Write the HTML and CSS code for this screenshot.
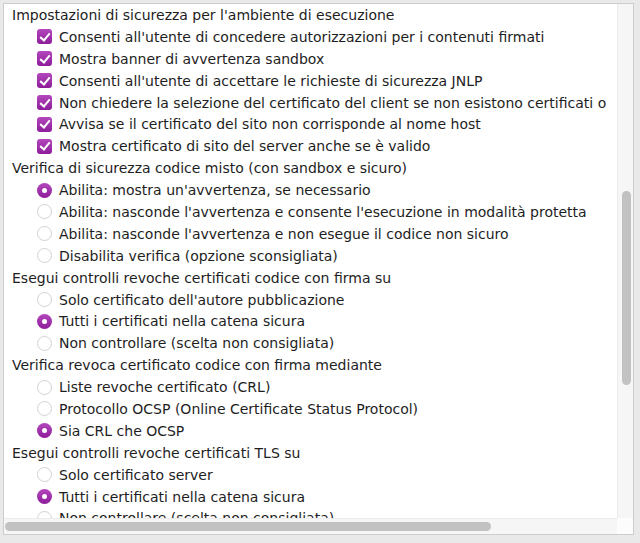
FILE: index.html
```html
<!DOCTYPE html>
<html lang="it">
<head>
    <meta charset="UTF-8">
    <meta name="viewport" content="width=device-width, initial-scale=1.0">
    <title>Impostazioni di sicurezza</title>
    <link rel="stylesheet" href="styles.css">
</head>
<body>
    <div class="pane">
        <div class="viewport">
            <div class="tree">
                <div class="row group">Impostazioni di sicurezza per l'ambiente di esecuzione</div>
                <div class="row item"><span class="check on"></span>Consenti all'utente di concedere autorizzazioni per i contenuti firmati</div>
                <div class="row item"><span class="check on"></span>Mostra banner di avvertenza sandbox</div>
                <div class="row item"><span class="check on"></span>Consenti all'utente di accettare le richieste di sicurezza JNLP</div>
                <div class="row item"><span class="check on"></span>Non chiedere la selezione del certificato del client se non esistono certificati o</div>
                <div class="row item"><span class="check on"></span>Avvisa se il certificato del sito non corrisponde al nome host</div>
                <div class="row item"><span class="check on"></span>Mostra certificato di sito del server anche se è valido</div>

                <div class="row group">Verifica di sicurezza codice misto (con sandbox e sicuro)</div>
                <div class="row item"><span class="radio on"></span>Abilita: mostra un'avvertenza, se necessario</div>
                <div class="row item"><span class="radio"></span>Abilita: nasconde l'avvertenza e consente l'esecuzione in modalità protetta</div>
                <div class="row item"><span class="radio"></span>Abilita: nasconde l'avvertenza e non esegue il codice non sicuro</div>
                <div class="row item"><span class="radio"></span>Disabilita verifica (opzione sconsigliata)</div>

                <div class="row group">Esegui controlli revoche certificati codice con firma su</div>
                <div class="row item"><span class="radio"></span>Solo certificato dell'autore pubblicazione</div>
                <div class="row item"><span class="radio on"></span>Tutti i certificati nella catena sicura</div>
                <div class="row item"><span class="radio"></span>Non controllare (scelta non consigliata)</div>

                <div class="row group">Verifica revoca certificato codice con firma mediante</div>
                <div class="row item"><span class="radio"></span>Liste revoche certificato (CRL)</div>
                <div class="row item"><span class="radio"></span>Protocollo OCSP (Online Certificate Status Protocol)</div>
                <div class="row item"><span class="radio on"></span>Sia CRL che OCSP</div>

                <div class="row group">Esegui controlli revoche certificati TLS su</div>
                <div class="row item"><span class="radio"></span>Solo certificato server</div>
                <div class="row item"><span class="radio on"></span>Tutti i certificati nella catena sicura</div>
                <div class="row item"><span class="radio"></span>Non controllare (scelta non consigliata)</div>
            </div>
        </div>
        <div class="vbar"><div class="thumb-v"></div></div>
        <div class="hbar"><div class="thumb-h"></div></div>
        <div class="corner"></div>
    </div>
</body>
</html>
```

FILE: styles.css
```css
html, body {
    margin: 0;
    height: 100%;
}
body {
    background-color: #e9e9e9;
    font-family: "DejaVu Sans", "Liberation Sans", sans-serif;
    font-size: 14px;
    color: #1e1e1e;
    padding: 3px 6px 8px 3px;
    box-sizing: border-box;
}
.pane {
    height: 100%;
    display: grid;
    grid-template-columns: 1fr 16px;
    grid-template-rows: 1fr 16px;
    border: 1px solid #cdcdcd;
    background-color: #fff;
    box-sizing: border-box;
}
.viewport {
    overflow: hidden;
    padding-left: 8px;
}
.tree {
    white-space: nowrap;
}
.row {
    height: 21.9px;
    display: flex;
    align-items: center;
}
.item {
    padding-left: 25px;
}
.check,
.radio {
    width: 15px;
    height: 15px;
    margin-right: 7px;
    flex: none;
    box-sizing: border-box;
    position: relative;
}
.check {
    border-radius: 3px;
    background: linear-gradient(#b347bd, #8d1c99);
}
.check::after {
    content: "";
    position: absolute;
    left: 5px;
    top: 1.5px;
    width: 4px;
    height: 8px;
    border: solid #fff;
    border-width: 0 2px 2px 0;
    transform: rotate(40deg);
}
.radio {
    border-radius: 50%;
    border: 1px solid #d2d2d2;
    background-color: #fff;
}
.radio.on {
    border: none;
    background: linear-gradient(#b347bd, #8d1c99);
}
.radio.on::after {
    content: "";
    position: absolute;
    left: 5px;
    top: 5px;
    width: 5px;
    height: 5px;
    border-radius: 50%;
    background-color: #fff;
}
.vbar {
    background-color: #f6f6f6;
    border-left: 1px solid #ececec;
    position: relative;
}
.thumb-v {
    position: absolute;
    left: 4px;
    top: 187px;
    width: 9px;
    height: 194px;
    border-radius: 5px;
    background-color: #c2c2c2;
}
.hbar {
    background-color: #f6f6f6;
    border-top: 1px solid #ececec;
    position: relative;
}
.thumb-h {
    position: absolute;
    left: 1px;
    top: 3px;
    width: 486px;
    height: 9px;
    border-radius: 5px;
    background-color: #c2c2c2;
}
.corner {
    background-color: #fcfcfc;
}
```
